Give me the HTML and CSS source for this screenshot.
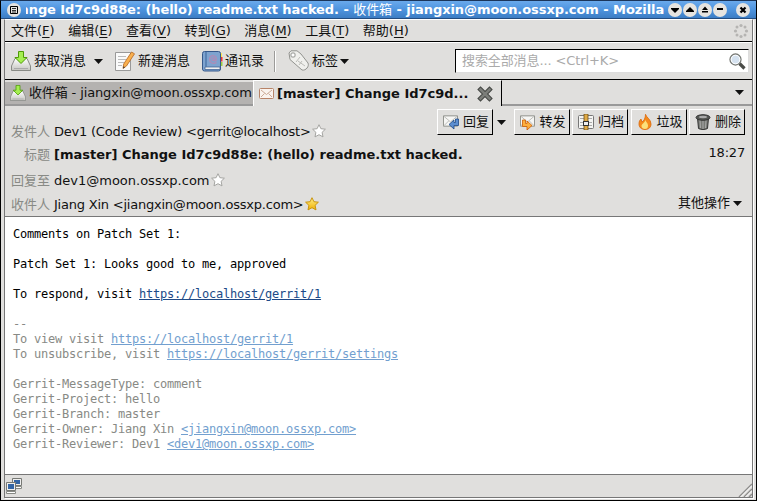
FILE: index.html
```html
<!DOCTYPE html>
<html lang="zh-CN">
<head>
<meta charset="utf-8">
<title>收件箱</title>
<link rel="stylesheet" href="styles.css">
</head>
<body>
<svg class="defs" width="0" height="0">
  <defs>
    <linearGradient id="gold" x2="0" y2="1"><stop offset="0" stop-color="#fff08a"/><stop offset="1" stop-color="#f0b000"/></linearGradient>
    <linearGradient id="tray" x2="0" y2="1"><stop offset="0" stop-color="#fff"/><stop offset="1" stop-color="#c4c4c0"/></linearGradient>
    <symbol id="inbox" viewBox="0 0 20 20">
      <path d="M4 7.500h12l3.500 7.500v4.500h-19V15z" fill="url(#tray)" stroke="#888a85"/>
      <path d="M3 17.500h14" fill="none" stroke="#aaa"/>
      <path d="M7.500.500h5v6h3.500L10 12.500 4 6.500h3.500z" fill="#a4ee50" stroke="#4e9a06"/>
    </symbol>
    <symbol id="mail" viewBox="0 0 16 12">
      <path d="M.500.500h15v11H.500z" fill="#f6f6f4" stroke="#8b8d88"/>
      <path d="M1 1l7 6 7-6M1 11l5-5m9 5l-5-5" fill="none" stroke="#b9b9b4"/>
    </symbol>
    <symbol id="star" viewBox="0 0 14 14">
      <path d="M7 .700l1.900 4 4.500.500-3.300 3.100.900 4.600L7 10.700l-4 2.200.9-4.600L.600 5.200l4.500-.5z"/>
    </symbol>
    <symbol id="down" viewBox="0 0 9 5"><path d="M0 0h9L4.500 5z" fill="#111"/></symbol>
  </defs>
</svg>
<div class="window">
  <header class="title">
    <span class="knob"><svg width="14" height="14"><path d="M3.500 3.500h7v7h-7z" fill="none" stroke="#000"/><path d="M5 5.500h4M5 7.500h4M5 9h4" fill="none" stroke="#000" stroke-width=".8"/></svg></span>
    <div class="caption"><span class="caption-text">ange Id7c9d88e: (hello) readme.txt hacked. - <i>收件箱</i> - jiangxin@moon.ossxp.com - Mozilla</span></div>
    <div class="knobs">
      <span class="knob"><svg width="14" height="14"><path d="M3 5h8v1L7 10 3 6z"/></svg></span>
      <span class="knob"><svg width="14" height="14"><path d="M3 9h8V8L7 4 3 8z"/></svg></span>
      <span class="knob"><svg width="14" height="14"><path d="M4 7h6L7 3.500zM4 8h6v1.500H4z"/></svg></span>
      <span class="knob"><svg width="14" height="14"><path d="M4 5h6v2H4z"/></svg></span>
      <span class="knob close"><svg width="14" height="14"><path d="M4.500 4.500l5 5m0-5l-5 5" stroke="#000" stroke-width="2.200"/></svg></span>
    </div>
  </header>
  <div class="client">
    <nav class="menu">
      <span>文件(<u>F</u>)</span><span>编辑(<u>E</u>)</span><span>查看(<u>V</u>)</span><span>转到(<u>G</u>)</span><span>消息(<u>M</u>)</span><span>工具(<u>T</u>)</span><span>帮助(<u>H</u>)</span>
      <svg class="throbber" width="16" height="16" fill="#b5b4b2"><circle cx="8" cy="2.500" r="1.600"/><circle cx="8" cy="13.500" r="1.600"/><circle cx="2.500" cy="8" r="1.600"/><circle cx="13.500" cy="8" r="1.600"/><circle cx="4" cy="4" r="1.500"/><circle cx="12" cy="4" r="1.500"/><circle cx="4" cy="12" r="1.500"/><circle cx="12" cy="12" r="1.500"/></svg>
    </nav>
    <div class="toolbar">
      <div class="tool get"><svg width="20" height="20"><use href="#inbox"/></svg><span>获取消息</span><svg class="arrow" width="9" height="5"><use href="#down"/></svg></div>
      <div class="tool compose"><svg width="20" height="20"><path d="M.500 1.500h15v18H.500z" fill="#fafafa" stroke="#999"/><path d="M3 5.500h8M3 8.500h8M3 11.500h6M3 14.500h4" stroke="#bbb"/><path d="M16.500 1l3 1.800-8 12.200-3.500 2.500.700-4.500z" fill="#f9b04e" stroke="#b5651d" stroke-width=".8"/><path d="M8 17.500l.5-2.200 1.500 1z" fill="#333"/></svg><span>新建消息</span></div>
      <div class="tool book"><svg width="21" height="21"><path d="M17 2h3v4h-3z" fill="#fce94f"/><path d="M17 6h3.500v4.500H17z" fill="#e33"/><path d="M17 11h3.500v4H17z" fill="#9bcf3e"/><rect x=".5" y=".5" width="18" height="19.500" rx="2" fill="#7ea3cf" stroke="#36598b"/><path d="M3 16h15v2.500H3z" fill="#f1f1f1" stroke="#36598b" stroke-width=".7"/><path d="M4 1v15" stroke="#4f78ab" stroke-width="1.500"/><path d="M14.500 11.500c-3 2-7 .500-7-3s3-4.500 5-3.500c2.500 1 2.500 5 .5 5-1 0-1-1-.8-3.500" fill="none" stroke="#b18bb5" stroke-width="1.200"/><circle cx="11" cy="8.300" r="1.500" fill="none" stroke="#b18bb5"/></svg><span>通讯录</span></div>
      <i class="separator"></i>
      <div class="tool tag"><svg width="22" height="22"><path d="M1 3L3 .800h6l4 3.200 7 9c1.500 3-2 8-6 7L2 9.500z" fill="#f0f0ed" stroke="#92938f"/><rect x="3" y="3" width="4" height="4" rx="1" fill="#fff" stroke="#92938f"/><path d="M8 12l4-5m-1 8l3-4m-4 0l7 5" stroke="#bcbcb8"/></svg><span>标签</span><svg class="arrow" width="9" height="5"><use href="#down"/></svg></div>
      <div class="search"><span>搜索全部消息... &lt;Ctrl+K&gt;</span><svg width="17" height="17"><path d="M10.500 10.500l5 5" stroke="#4a4c48" stroke-width="3.200"/><circle cx="6.500" cy="6.500" r="5.500" fill="#d5e2f0" stroke="#777974" stroke-width="1.300"/><circle cx="6.500" cy="6.500" r="4.300" fill="none" stroke="#fff"/></svg></div>
    </div>
    <div class="tabs">
      <div class="tab inactive"><svg width="16" height="16"><use href="#inbox"/></svg><span>收件箱 - jiangxin@moon.ossxp.com</span></div>
      <div class="tab active"><svg width="15" height="11" viewBox="0 0 15 11"><rect x=".5" y=".5" width="14" height="10" rx="1" fill="#faf3ed" stroke="#b78367"/><path d="M2 2l5.500 4.500L13 2M2 9l3.500-3.500m7.500 3.500L9.500 5.500" stroke="#cbaa96" fill="none"/></svg><b>[master] Change Id7c9d...</b><svg class="x" width="16" height="16"><path d="M3.500 3.500l9 9m0-9l-9 9" stroke="#444643" stroke-width="4.600" stroke-linecap="square"/><path d="M3.500 3.500l9 9m0-9l-9 9" stroke="#7b7d79" stroke-width="2.600" stroke-linecap="square"/></svg></div>
      <div class="tabs-rest"><svg width="9" height="5"><use href="#down"/></svg></div>
    </div>
    <section class="head">
      <div class="fields">
        <div class="row from"><label>发件人</label><span class="tight">Dev1 (Code Review) &lt;gerrit@localhost&gt;</span><svg class="star" width="14" height="14"><use href="#star"/></svg></div>
        <div class="row subject"><label>标题</label><b>[master] Change Id7c9d88e: (hello) readme.txt hacked.</b></div>
        <div class="row reply"><label>回复至</label><span>dev1@moon.ossxp.com</span><svg class="star" width="14" height="14"><use href="#star"/></svg></div>
        <div class="row to"><label>收件人</label><span class="tight">Jiang Xin &lt;jiangxin@moon.ossxp.com&gt;</span><svg class="star gold" width="14" height="14"><use href="#star"/></svg></div>
      </div>
      <div class="side">
        <div class="buttons">
          <div class="btn"><svg width="16" height="16"><svg y="1" width="15" height="12"><use href="#mail"/></svg><path d="M15.500 5v6.500H11V15L6 10.500 11 6v2.500h1.500V5z" fill="#5c8ed0" stroke="#204a87" stroke-width=".8"/></svg>回复</div>
          <svg class="drop" width="9" height="5"><use href="#down"/></svg>
          <div class="btn"><svg width="16" height="16"><svg y="1" width="15" height="12"><use href="#mail"/></svg><path d="M2.500 6v6.500H7V16l5-4.500L7 7v2.500H5.500V6z" fill="#fcaf3e" stroke="#ce5c00" stroke-width=".8"/></svg>转发</div>
          <div class="btn"><svg width="16" height="16"><rect x=".5" y="1.500" width="15" height="13" rx="1" fill="#f4f4f2" stroke="#777"/><path d="M2 4.500h12M2 8.500h12M2 11.500h12" stroke="#aaa"/><path d="M6 0h4v16H6z" fill="#e0aa45" stroke="#6b4d17" stroke-width=".8"/><rect x="5.500" y="7.500" width="5" height="4" fill="#eee" stroke="#333"/></svg>归档</div>
          <div class="btn"><svg width="16" height="16"><path d="M8.500.300c1 3.500 5.500 5 5.500 9.700 0 3-2 5.500-6 5.500S2 13 2 10c0-3 1-4 2-5l1 3c2-1 3.500-4 3.500-7.700z" fill="#f58a1c" stroke="#d9670a" stroke-width=".8"/><path d="M8.500 6c0 2 2.500 3 2.500 5.500S10 15 8 15s-3.500-1-3.500-3C4.500 10 7.500 9 8.500 6z" fill="#fce07a"/></svg>垃圾</div>
          <div class="btn"><svg width="16" height="16"><path d="M2.500 4l1 10.500c2 1.300 7 1.300 9 0l1-10.500z" fill="#777974" stroke="#333"/><path d="M5 6l.500 8M8 6v9m3-9l-.500 8" stroke="#aaa"/><ellipse cx="8" cy="3.500" rx="7" ry="2.800" fill="#555753" stroke="#333"/><ellipse cx="8" cy="3" rx="4" ry="1.200" fill="#aaa"/></svg>删除</div>
        </div>
        <time>18:27</time>
        <div class="more">其他操作<svg width="9" height="5"><use href="#down"/></svg></div>
      </div>
    </section>
    <main class="message"><pre>Comments on Patch Set 1:

Patch Set 1: Looks good to me, approved

To respond, visit <a>https://localhost/gerrit/1</a>

<span class="sig">--
To view visit <a>https://localhost/gerrit/1</a>
To unsubscribe, visit <a>https://localhost/gerrit/settings</a>

Gerrit-MessageType: comment
Gerrit-Project: hello
Gerrit-Branch: master
Gerrit-Owner: Jiang Xin <a>&lt;jiangxin@moon.ossxp.com&gt;</a>
Gerrit-Reviewer: Dev1 <a>&lt;dev1@moon.ossxp.com&gt;</a></span></pre></main>
    <footer class="status">
      <svg width="16" height="16"><path d="M6.500.500h9v7h-9z" fill="#eee" stroke="#777974"/><path d="M8 2h6v4H8z" fill="#3465a4"/><path d="M8.500 8.500h7v2h-7z" fill="#fff" stroke="#888a85"/><path d="M.500 4.500h9v8h-9z" fill="#eee" stroke="#777974"/><path d="M2 6h6v5H2z" fill="#3465a4"/><path d="M.500 13.500h9v2h-9z" fill="#fff" stroke="#888a85"/></svg>
      <svg width="14" height="14"><path d="M1 14L14 1M6 14l8-8M11 14l3-3" stroke="#8e8d8b" stroke-width="1.500"/><path d="M2.500 14L14 2.500M7.500 14L14 7.500" stroke="#fff"/></svg>
    </footer>
  </div>
</div>
</body>
</html>
```
FILE: styles.css
```css
* { box-sizing: border-box; }
body { margin: 0; overflow: hidden; font: 13px/18px "DejaVu Sans", "Noto Sans CJK SC", sans-serif; color: #111; }
svg { flex: none; display: block; }
.defs { position: absolute; }
.window { width: 757px; height: 501px; background: #e0dfdd; border: 1px solid #000; border-top-color: #1b355a; display: flex; flex-direction: column; white-space: nowrap; }
.title { height: 18px; flex: none; background: linear-gradient(#6aa9ec, #4e94df 50%, #3c7dc4); border-bottom: 1px solid #244d80; display: flex; align-items: center; padding: 0 6px; }
.caption { flex: 1; min-width: 0; overflow: hidden; height: 17px; line-height: 17px; margin-left: 5px; }
.caption-text { display: inline-block; margin-left: -6px; font-weight: bold; color: #fff; letter-spacing: -.07px; }
.caption-text i { font-style: normal; font-weight: normal; }
.knobs { display: flex; gap: 1px; }
.knob { width: 14px; height: 14px; border-radius: 50%; background: #e6e4e0; flex: none; }
.close { margin-left: 8px; }
.client { flex: 1; margin: 0 3px 2px; border: 1px solid #777; border-top-color: #fff; box-shadow: 1px 1px #fff; display: flex; flex-direction: column; min-height: 0; }
.menu { height: 22px; flex: none; border-bottom: 1px solid #000; display: flex; align-items: center; padding: 0 3px 0 6px; gap: 13.500px; }
.menu u { text-underline-offset: 2px; }
.throbber { margin-left: auto; }
.toolbar { height: 38px; flex: none; border-top: 1px solid #fff; border-bottom: 1px solid #000; display: flex; align-items: center; padding: 0 3px 0 6px; }
.tool { display: flex; align-items: center; gap: 3px; }
.get .arrow { margin-left: 5px; }
.compose { margin-left: 12px; }
.book { margin-left: 12px; gap: 2px; }
.separator { width: 2px; height: 21px; margin: 0 12px 0 10px; border-left: 1px solid #9c9b99; border-right: 1px solid #fff; }
.tag { gap: 2px; }
.search { width: 294px; height: 24px; margin-left: auto; background: #fff; border: 1px solid #000; border-right-color: #ddd; border-bottom-color: #ddd; display: flex; align-items: center; justify-content: space-between; padding: 0 2px 0 6px; color: #aaa; letter-spacing: -.1px; }
.tabs { height: 26px; flex: none; display: flex; }
.tab { display: flex; align-items: center; overflow: hidden; gap: 3px; padding-left: 5px; }
.inactive { width: 248px; height: 24px; margin-top: 2px; background: #b4b2b0; border-bottom: 2px solid #999; letter-spacing: -.13px; }
.active { width: 249px; border-left: 1px solid #fff; border-top: 1px solid #fff; border-right: 1px solid #000; }
.x { margin-left: 6px; }
.tabs-rest { flex: 1; border-bottom: 2px solid #999; display: flex; align-items: center; justify-content: flex-end; padding-right: 8px; }
.head { height: 111px; flex: none; display: flex; border-bottom: 1px solid #777; }
.fields { padding: 17px 0 0 6px; flex: 1; min-width: 0; }
.row { display: flex; align-items: center; height: 18px; }
.row label { width: 39px; flex: none; text-align: right; color: #888a85; margin-right: 4px; }
.tight { letter-spacing: -.22px; }
.subject { margin-top: 5px; }
.reply { margin-top: 8px; }
.to { margin-top: 6px; }
.star { fill: #fff; stroke: #a5a5a2; margin: -3px 0 0 1px; }
.gold { fill: url(#gold); stroke: #c99510; }
.side { padding: 3px 7px 0 0; display: flex; flex-direction: column; align-items: flex-end; flex: none; }
.buttons { display: flex; align-items: center; }
.btn { width: 56px; height: 26px; border: 1px solid #fff; border-right: 1px solid #000; border-bottom: 1px solid #000; display: flex; align-items: center; gap: 4px; padding-left: 5px; margin-left: 2.500px; }
.drop { margin: 0 5px 0 4px; }
time { margin-top: 9px; letter-spacing: -.2px; }
.more { margin: 32px 3px 0 0; display: flex; align-items: center; gap: 3px; }
.message { flex: 1; background: #fff; border-bottom: 1px solid #777; padding: 10px 8px; min-height: 0; }
pre { margin: 0; font: 12px/15px "DejaVu Sans Mono", monospace; letter-spacing: -.224px; color: #000; }
a { color: #204a87; text-decoration: underline; }
.sig { color: #888a85; }
.sig a { color: #729fcf; }
.status { height: 22px; flex: none; display: flex; justify-content: space-between; align-items: center; padding-left: 1px; }
.status svg:last-child { align-self: flex-end; }
```
